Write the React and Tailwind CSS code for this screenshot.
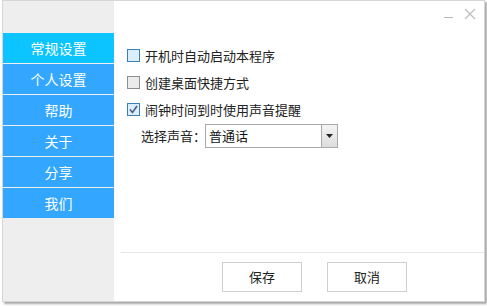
import { useState } from "react";

const menu = ["常规设置", "个人设置", "帮助", "关于", "分享", "我们"];

const Check = ({ checked, label, tint }) => (
  <label className="flex items-center gap-[5px] h-[27px]">
    <span
      className={`w-[13px] h-[13px] border flex items-center justify-center ${
        tint ? "border-[#3c7fb1] bg-[#dbeefb]" : "border-[#8e8f8f] bg-[#ececec]"
      }`}
    >
      {checked && (
        <svg width="9" height="9" viewBox="0 0 9 9">
          <path d="M1 4.5 L3.5 7.5 L8 1" fill="none" stroke="#4a5b8c" strokeWidth="1.6" />
        </svg>
      )}
    </span>
    <span className="text-[13px] text-[#222] whitespace-nowrap">{label}</span>
  </label>
);

const App = () => {
  const [active] = useState(0);

  return (
    <div
      className="w-[487px] h-[307px] bg-white"
      style={{ fontFamily: '"Noto Sans CJK SC", "Noto Sans", sans-serif' }}
    >
      <div className="ml-[2px] w-[483px] h-[302px] border border-[#d6d6d6] shadow-[2px_2px_2px_rgba(0,0,0,0.35)] flex">
        {/* SIDEBAR */}
        <div className="w-[111px] bg-[#eeeeee] pt-[32px] flex flex-col gap-[1px]">
          {menu.map((m, i) => (
            <div
              key={m}
              className={`h-[30px] flex items-center justify-center text-white text-[14px] ${
                i === active ? "bg-[#0cc4ff]" : "bg-[#33a7ff]"
              }`}
            >
              {m}
            </div>
          ))}
        </div>

        {/* CONTENT */}
        <div className="flex-1 flex flex-col">
          <div className="h-[27px] flex justify-end items-start pr-[8px] gap-[11px]">
            <span className="mt-[16px] w-[9px] h-[1px] bg-[#b8b8b8]" />
            <svg width="12" height="12" viewBox="0 0 12 12" className="mt-[7px]">
              <path d="M1 1 L11 11 M11 1 L1 11" stroke="#c0c0c0" strokeWidth="1.4" />
            </svg>
          </div>

          <div className="flex-1 pl-[13px] pt-[14px]">
            <Check tint label="开机时自动启动本程序" />
            <Check label="创建桌面快捷方式" />
            <Check checked tint label="闹钟时间到时使用声音提醒" />
            <div className="flex items-center mt-[1px] pl-[14px]">
              <span className="text-[13px] text-[#222] w-[64px] whitespace-nowrap">选择声音：</span>
              <div className="w-[133px] h-[24px] border border-[#a9a9a9] flex items-center">
                <span className="flex-1 pl-[3px] text-[13px] text-[#111]">普通话</span>
                <span className="w-[16px] h-[22px] border-l border-[#a9a9a9] bg-gradient-to-b from-[#f4f4f4] to-[#dcdcdc] flex items-center justify-center">
                  <svg width="7" height="4" viewBox="0 0 7 4">
                    <path d="M0 0 H7 L3.5 4 Z" fill="#222" />
                  </svg>
                </span>
              </div>
            </div>
          </div>

          <div className="ml-[7px] h-[49px] border-t border-[#e6e6e6] flex items-center justify-end gap-[25px] pr-[77px] pb-[1px]">
            <button className="w-[80px] h-[30px] border border-[#cfcfcf] bg-white text-[13px] text-[#222]">
              保存
            </button>
            <button className="w-[80px] h-[30px] border border-[#cfcfcf] bg-white text-[13px] text-[#222]">
              取消
            </button>
          </div>
        </div>
      </div>
    </div>
  );
};

export default App;
